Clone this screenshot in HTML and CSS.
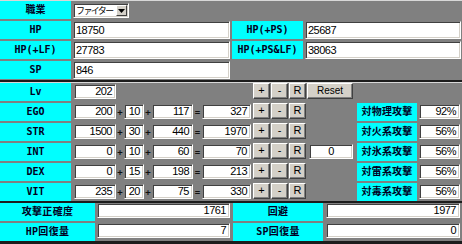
FILE: index.html
```html
<!DOCTYPE html>
<html lang="ja">
<head>
<meta charset="utf-8">
<link rel="stylesheet" href="styles.css">
</head>
<body>
<div class="sheet">
  <div class="sec sec1">
    <div class="r1">
      <div class="lab w71">職業</div>
      <div class="select"><span class="seltext">ファイター</span><span class="selbtn"><svg width="7" height="4" viewBox="0 0 7 4"><path d="M0 0H7L3.5 4Z" fill="#000"/></svg></span></div>
    </div>
    <div class="r1">
      <div class="lab w71">HP</div><div class="inp i1a">18750</div>
      <div class="lab w71">HP(+PS)</div><div class="inp i1b">25687</div>
    </div>
    <div class="r1">
      <div class="lab w71">HP(+LF)</div><div class="inp i1a">27783</div>
      <div class="lab w71">HP(+PS&amp;LF)</div><div class="inp i1b">38063</div>
    </div>
    <div class="r1">
      <div class="lab w71">SP</div><div class="inp i1a">846</div>
    </div>
  </div>

  <div class="sec sec2">
    <div class="r2">
      <div class="lab w71">Lv</div>
      <div class="inp num b-in">202</div>
      <div class="spacer"></div>
      <div class="btn first">+</div><div class="btn">-</div><div class="btn">R</div>
      <div class="mid"><div class="btn reset">Reset</div></div>
    </div>
    <div class="r2">
      <div class="lab w71">EGO</div>
      <div class="inp num b-in">200</div><div class="op">+</div><div class="inp num s-in">10</div><div class="op">+</div><div class="inp num e-in">117</div><div class="op eq">=</div><div class="inp num t-in">327</div>
      <div class="btn first">+</div><div class="btn">-</div><div class="btn">R</div>
      <div class="mid"></div>
      <div class="lab lab2">対物理攻撃</div><div class="inp num v-in">92%</div>
    </div>
    <div class="r2">
      <div class="lab w71">STR</div>
      <div class="inp num b-in">1500</div><div class="op">+</div><div class="inp num s-in">30</div><div class="op">+</div><div class="inp num e-in">440</div><div class="op eq">=</div><div class="inp num t-in">1970</div>
      <div class="btn first">+</div><div class="btn">-</div><div class="btn">R</div>
      <div class="mid"></div>
      <div class="lab lab2">対火系攻撃</div><div class="inp num v-in">56%</div>
    </div>
    <div class="r2">
      <div class="lab w71">INT</div>
      <div class="inp num b-in">0</div><div class="op">+</div><div class="inp num s-in">10</div><div class="op">+</div><div class="inp num e-in">60</div><div class="op eq">=</div><div class="inp num t-in">70</div>
      <div class="btn first">+</div><div class="btn">-</div><div class="btn">R</div>
      <div class="mid"><div class="inp zero">0</div></div>
      <div class="lab lab2">対氷系攻撃</div><div class="inp num v-in">56%</div>
    </div>
    <div class="r2">
      <div class="lab w71">DEX</div>
      <div class="inp num b-in">0</div><div class="op">+</div><div class="inp num s-in">15</div><div class="op">+</div><div class="inp num e-in">198</div><div class="op eq">=</div><div class="inp num t-in">213</div>
      <div class="btn first">+</div><div class="btn">-</div><div class="btn">R</div>
      <div class="mid"></div>
      <div class="lab lab2">対雷系攻撃</div><div class="inp num v-in">56%</div>
    </div>
    <div class="r2">
      <div class="lab w71">VIT</div>
      <div class="inp num b-in">235</div><div class="op">+</div><div class="inp num s-in">20</div><div class="op">+</div><div class="inp num e-in">75</div><div class="op eq">=</div><div class="inp num t-in">330</div>
      <div class="btn first">+</div><div class="btn">-</div><div class="btn">R</div>
      <div class="mid"></div>
      <div class="lab lab2">対毒系攻撃</div><div class="inp num v-in">56%</div>
    </div>
  </div>

  <div class="sec sec3">
    <div class="r3">
      <div class="lab l3a">攻撃正確度</div><div class="inp num i3a">1761</div>
      <div class="lab l3b">回避</div><div class="inp num i3b">1977</div>
    </div>
    <div class="r3">
      <div class="lab l3a">HP回復量</div><div class="inp num i3a">7</div>
      <div class="lab l3b">SP回復量</div><div class="inp num i3b">0</div>
    </div>
  </div>
</div>
</body>
</html>
```

FILE: styles.css
```css
html, body {
  margin: 0;
  padding: 0;
  background: #808080;
}
.sheet {
  width: 462px;
  height: 244px;
  overflow: hidden;
  background: #808080;
}
.sec {
  display: flex;
  flex-direction: column;
  gap: 2px;
}
.sec1 {
  border-top: 1px solid #d8d8d8;
  padding-bottom: 1px;
  border-bottom: 2px solid #1c1c1c;
}
.sec2 {
  border-top: 1px solid #d8d8d8;
  border-bottom: 2px solid #1c1c1c;
}
.sec3 {
  border-bottom: 3px solid #1c1c1c;
}
.r1, .r2, .r3 {
  display: flex;
  height: 18px;
}
.r1 { gap: 2px; }

.lab {
  background: #00ffff;
  color: #000022;
  font-family: "DejaVu Sans Mono", "Noto Sans CJK JP", monospace;
  font-weight: bold;
  font-size: 10px;
  line-height: 18px;
  height: 18px;
  text-align: center;
  white-space: nowrap;
  overflow: hidden;
}
.w71 { width: 71px; flex: none; }

.inp {
  box-sizing: border-box;
  flex: none;
  background: #fff;
  border: 1px solid;
  border-color: #808080 #ffffff #ffffff #808080;
  box-shadow: inset 1px 1px 0 #404040, inset -1px -1px 0 #d4d0c8;
  font-family: "Liberation Sans", "Noto Sans CJK JP", sans-serif;
  font-size: 11px;
  letter-spacing: -0.5px;
  color: #000;
  white-space: nowrap;
  overflow: hidden;
}
.i1a, .i1b {
  height: 18px;
  line-height: 16px;
  padding-left: 2px;
}
.i1a { width: 157px; }
.i1b { width: 156px; }

.select {
  box-sizing: border-box;
  margin-top: 2px;
  width: 56px;
  height: 15px;
  background: #fff;
  border: 1px solid;
  border-color: #808080 #ffffff #ffffff #808080;
  box-shadow: inset 1px 1px 0 #404040, inset -1px -1px 0 #d4d0c8;
  display: flex;
  align-items: stretch;
  padding: 1px;
}
.seltext {
  flex: 1;
  min-width: 0;
  font-family: "Noto Sans CJK JP", sans-serif;
  font-size: 9px;
  letter-spacing: -1.6px;
  line-height: 11px;
  padding-left: 1px;
  color: #000;
  white-space: nowrap;
}
.selbtn {
  box-sizing: border-box;
  flex: none;
  width: 11px;
  background: #d4d0c8;
  border: 1px solid;
  border-color: #ffffff #404040 #404040 #ffffff;
  display: flex;
  align-items: center;
  justify-content: center;
}

.num {
  text-align: right;
  padding-right: 3px;
  height: 15px;
  line-height: 13px;
  margin-top: 1px;
}
.b-in { margin-left: 3px; width: 42px; }
.s-in { width: 20px; }
.e-in { width: 41px; }
.t-in { width: 49px; }
.v-in { margin-left: 2px; width: 41px; }
.op {
  flex: none;
  width: 8px;
  font-family: "DejaVu Sans Mono", monospace;
  font-size: 9px;
  font-weight: bold;
  line-height: 18px;
  text-align: center;
  color: #101010;
}
.eq { width: 9px; }
.spacer { flex: none; width: 135px; }

.btn {
  box-sizing: border-box;
  flex: none;
  width: 17px;
  height: 16px;
  margin-left: 1px;
  background: #d4d0c8;
  border: 1px solid;
  border-color: #ffffff #404040 #404040 #ffffff;
  box-shadow: inset -1px -1px 0 #808080;
  font-family: "Liberation Sans", sans-serif;
  font-size: 11px;
  line-height: 13px;
  text-align: center;
  color: #000;
}
.btn.first { margin-left: 2px; }
.mid {
  flex: none;
  width: 49px;
  margin-left: 1px;
}
.btn.reset {
  width: 46px;
  margin-left: 0;
  font-size: 10px;
}
.zero {
  margin-left: 2px;
  margin-top: 1px;
  width: 44px;
  height: 15px;
  line-height: 13px;
  text-align: center;
}
.lab2 {
  flex: none;
  width: 60px;
  margin-left: 1px;
  letter-spacing: 0.2px;
}

.l3a { flex: none; width: 95px; letter-spacing: 0.3px; }
.l3b { flex: none; width: 90px; margin-left: 3px; letter-spacing: 0.3px; }
.i3a { margin-left: 2px; width: 133px; margin-top: 0; }
.i3b { margin-left: 3px; width: 134px; margin-top: 0; }
```
